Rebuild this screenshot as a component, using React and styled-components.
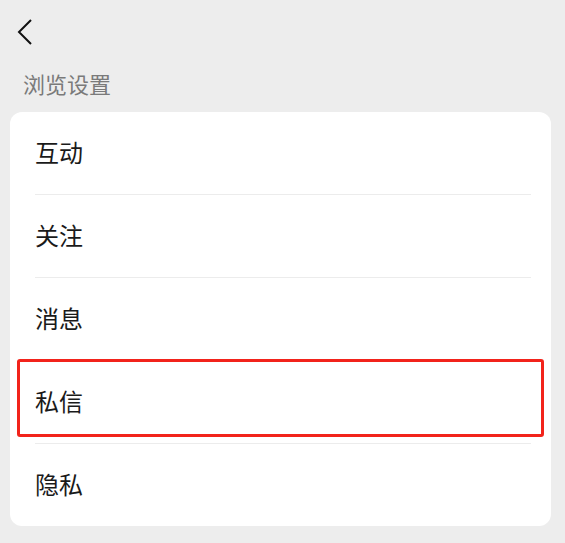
import styled, { createGlobalStyle } from "styled-components";

const GlobalStyle = createGlobalStyle`
    body {
        margin: 0;
        background: #ededed;
        font-family: "Noto Sans CJK SC", "Noto Sans", sans-serif;
    }
`;

const Page = styled.div`
    width: 565px;
    height: 543px;
    background: #ededed;
    overflow: hidden;
`;

const NavBar = styled.div`
    height: 62px;
    display: flex;
    align-items: center;
    padding-left: 16px;
`;

const BackButton = styled.button`
    display: flex;
    padding: 0;
    border: none;
    background: none;
    margin-top: 1px;
`;

const SectionTitle = styled.div`
    height: 50px;
    box-sizing: border-box;
    padding: 6px 0 0 23px;
    font-size: 22px;
    line-height: 30px;
    color: #7a7a7a;
`;

const Card = styled.div`
    position: relative;
    margin: 0 14px 0 10px;
    background: #fff;
    border-radius: 12px;
`;

const Row = styled.div`
    height: 82px;
    box-sizing: border-box;
    display: flex;
    align-items: center;
    padding: 0 0 4px 25px;
    font-size: 24px;
    color: #1a1a1a;
`;

const Divider = styled.div`
    height: 1px;
    margin: 0 20px 0 25px;
    background: #ececec;
`;

const Highlight = styled.div`
    position: absolute;
    left: 7px;
    top: 247px;
    width: 527px;
    height: 78px;
    box-sizing: border-box;
    border: 3px solid #f2231b;
    border-radius: 3px;
    pointer-events: none;
`;

const items = ["互动", "关注", "消息", "私信", "隐私"];

export default function App() {
    return (
        <Page>
            <GlobalStyle />
            <NavBar>
                <BackButton>
                    <svg width="18" height="28" viewBox="0 0 18 28">
                        <polyline points="15,2 3,14 15,26" fill="none" stroke="#111" strokeWidth="2" />
                    </svg>
                </BackButton>
            </NavBar>
            <SectionTitle>浏览设置</SectionTitle>
            <Card>
                {items.map((label, i) => (
                    <div key={label}>
                        {i > 0 && <Divider />}
                        <Row>{label}</Row>
                    </div>
                ))}
                <Highlight />
            </Card>
        </Page>
    );
}
